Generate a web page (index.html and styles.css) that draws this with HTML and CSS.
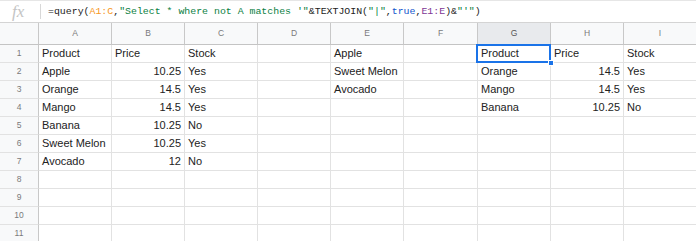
FILE: index.html
```html
<!DOCTYPE html>
<html>
  <head>
    <title>query not matches</title>
    <link rel="stylesheet" href="styles.css">
  </head>
  <body>

    <div class="formula-bar">
      <span class="fx"><i>fx</i></span>
      <span class="formula">=query(<span class="ref1">A1:C</span>,<span class="str">"Select * where not A matches '"</span>&amp;TEXTJOIN(<span class="str">"|"</span>,<span class="bool">true</span>,<span class="ref2">E1:E</span>)&amp;<span class="str">"'"</span>)</span>
    </div>

    <div class="sheet">
      <div class="corner"></div>
      <div class="col-head">A</div>
      <div class="col-head">B</div>
      <div class="col-head">C</div>
      <div class="col-head">D</div>
      <div class="col-head">E</div>
      <div class="col-head">F</div>
      <div class="col-head active">G</div>
      <div class="col-head">H</div>
      <div class="col-head">I</div>

      <div class="row-head">1</div>
      <div class="cell">Product</div><div class="cell">Price</div><div class="cell">Stock</div><div class="cell"></div>
      <div class="cell">Apple</div><div class="cell"></div>
      <div class="cell selected">Product</div><div class="cell">Price</div><div class="cell">Stock</div>

      <div class="row-head">2</div>
      <div class="cell">Apple</div><div class="cell num">10.25</div><div class="cell">Yes</div><div class="cell"></div>
      <div class="cell">Sweet Melon</div><div class="cell"></div>
      <div class="cell">Orange</div><div class="cell num">14.5</div><div class="cell">Yes</div>

      <div class="row-head">3</div>
      <div class="cell">Orange</div><div class="cell num">14.5</div><div class="cell">Yes</div><div class="cell"></div>
      <div class="cell">Avocado</div><div class="cell"></div>
      <div class="cell">Mango</div><div class="cell num">14.5</div><div class="cell">Yes</div>

      <div class="row-head">4</div>
      <div class="cell">Mango</div><div class="cell num">14.5</div><div class="cell">Yes</div><div class="cell"></div>
      <div class="cell"></div><div class="cell"></div>
      <div class="cell">Banana</div><div class="cell num">10.25</div><div class="cell">No</div>

      <div class="row-head">5</div>
      <div class="cell">Banana</div><div class="cell num">10.25</div><div class="cell">No</div><div class="cell"></div>
      <div class="cell"></div><div class="cell"></div><div class="cell"></div><div class="cell"></div><div class="cell"></div>

      <div class="row-head">6</div>
      <div class="cell">Sweet Melon</div><div class="cell num">10.25</div><div class="cell">Yes</div><div class="cell"></div>
      <div class="cell"></div><div class="cell"></div><div class="cell"></div><div class="cell"></div><div class="cell"></div>

      <div class="row-head">7</div>
      <div class="cell">Avocado</div><div class="cell num">12</div><div class="cell">No</div><div class="cell"></div>
      <div class="cell"></div><div class="cell"></div><div class="cell"></div><div class="cell"></div><div class="cell"></div>

      <div class="row-head">8</div>
      <div class="cell"></div><div class="cell"></div><div class="cell"></div><div class="cell"></div>
      <div class="cell"></div><div class="cell"></div><div class="cell"></div><div class="cell"></div><div class="cell"></div>

      <div class="row-head">9</div>
      <div class="cell"></div><div class="cell"></div><div class="cell"></div><div class="cell"></div>
      <div class="cell"></div><div class="cell"></div><div class="cell"></div><div class="cell"></div><div class="cell"></div>

      <div class="row-head">10</div>
      <div class="cell"></div><div class="cell"></div><div class="cell"></div><div class="cell"></div>
      <div class="cell"></div><div class="cell"></div><div class="cell"></div><div class="cell"></div><div class="cell"></div>

      <div class="row-head">11</div>
      <div class="cell"></div><div class="cell"></div><div class="cell"></div><div class="cell"></div>
      <div class="cell"></div><div class="cell"></div><div class="cell"></div><div class="cell"></div><div class="cell"></div>
    </div>

  </body>
</html>
```

FILE: styles.css
```css
body {
  margin: 0;
  background: #fff;
  font-family: "Liberation Sans", Arial, sans-serif;
  color: #222;
  overflow: hidden;
}
.formula-bar {
  display: flex;
  align-items: center;
  height: 23px;
  border-top: 1px solid #e6e6e6;
  border-bottom: 1px solid #d4d4d4;
  box-sizing: border-box;
}
.fx {
  width: 40px;
  box-sizing: border-box;
  padding-left: 12px;
  font-family: "Liberation Serif", serif;
  font-size: 17px;
  color: #c4c4c4;
}
.fx i {
  display: block;
  border-right: 1px solid #d8d8d8;
  width: 28px;
  line-height: 15px;
}
.formula {
  padding-left: 8px;
  font-family: "Liberation Mono", monospace;
  font-size: 9.9px;
  color: #222;
  white-space: pre;
}
.formula .ref1 { color: #f7981d; }
.formula .ref2 { color: #7e3794; }
.formula .str { color: #0b8043; }
.formula .bool { color: #1155cc; }

.sheet {
  display: grid;
  grid-template-columns: 39px 73px 73px 73px 73px 73px 74px 73px 73px 73px;
  grid-template-rows: 22px repeat(11, 18px);
}
.sheet > div {
  box-sizing: border-box;
  border-right: 1px solid #e2e2e2;
  border-bottom: 1px solid #e2e2e2;
  white-space: nowrap;
  overflow: hidden;
}
.corner,
.col-head {
  background: #f8f9fa;
  border-right-color: #c8c8c8 !important;
  border-bottom: 1px solid #c4c4c4 !important;
}
.col-head {
  text-align: center;
  font-size: 8.5px;
  line-height: 21px;
  color: #7a7a7a;
}
.col-head.active {
  background: #e8eaed;
  color: #555;
}
.row-head {
  background: #f8f9fa;
  border-right-color: #c8c8c8 !important;
  text-align: center;
  font-size: 8.5px;
  line-height: 17px;
  color: #7a7a7a;
}
.cell {
  padding: 0 3px;
  font-size: 11px;
  line-height: 17px;
}
.cell.num {
  text-align: right;
}
.cell.selected {
  position: relative;
  overflow: visible !important;
}
.cell.selected::before {
  content: "";
  position: absolute;
  left: -2px;
  top: -1px;
  right: -1px;
  bottom: -1px;
  border: 2px solid #1a73e8;
}
.cell.selected::after {
  content: "";
  position: absolute;
  right: -4px;
  bottom: -4px;
  width: 6px;
  height: 6px;
  background: #1a73e8;
  border: 1px solid #fff;
  box-sizing: border-box;
  z-index: 1;
}
```
